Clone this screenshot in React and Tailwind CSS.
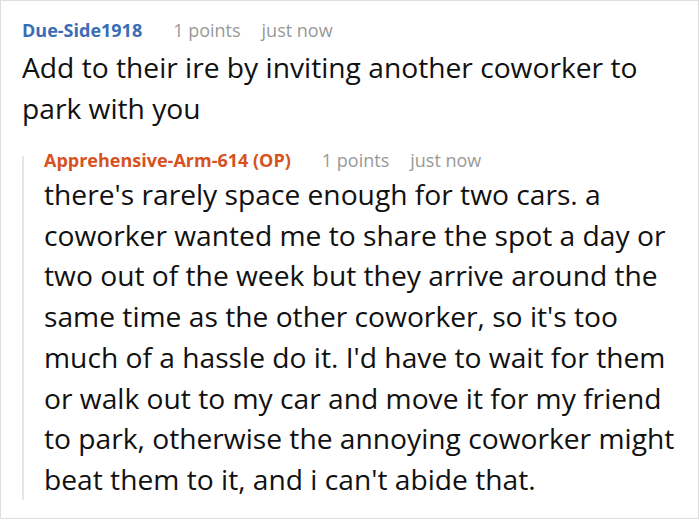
const Meta = ({ name, color }) => (
  <div className="flex items-baseline text-[18px] leading-[24px]">
    <span className={`font-bold ${color}`}>{name}</span>
    <span className="ml-[31px] text-[#999]">1 points</span>
    <span className="ml-[21px] text-[#999]">just now</span>
  </div>
);

const App = () => {
  return (
    <div
      className="w-[699px] h-[519px] bg-white border border-[#dedede] overflow-hidden text-[#111]"
      style={{ fontFamily: '"Open Sans", "Noto Sans", sans-serif' }}
    >
      <div className="pl-[21px] pr-[14px] pt-[17px]">
        <Meta name="Due-Side1918" color="text-[#3a6db5]" />
        <p className="mt-[5px] text-[28.2px] leading-[41px]">
          Add to their ire by inviting another coworker to park with you
        </p>

        {/* reply, the grey rule starts a little below the header top */}
        <div className="relative mt-[19px] pl-[22px] before:absolute before:left-0 before:top-[8px] before:bottom-0 before:w-[2px] before:bg-[#e6e6e6]">
          <Meta name="Apprehensive-Arm-614 (OP)" color="text-[#d6521e]" />
          <p className="mt-[2px] text-[28.2px] leading-[40.7px]">
            there's rarely space enough for two cars. a coworker wanted me to
            share the spot a day or two out of the week but they arrive around
            the same time as the other coworker, so it's too much of a hassle do
            it. I'd have to wait for them or walk out to my car and move it for
            my friend to park, otherwise the annoying coworker might beat them
            to it, and i can't abide that.
          </p>
        </div>
      </div>
    </div>
  );
};

export default App;
